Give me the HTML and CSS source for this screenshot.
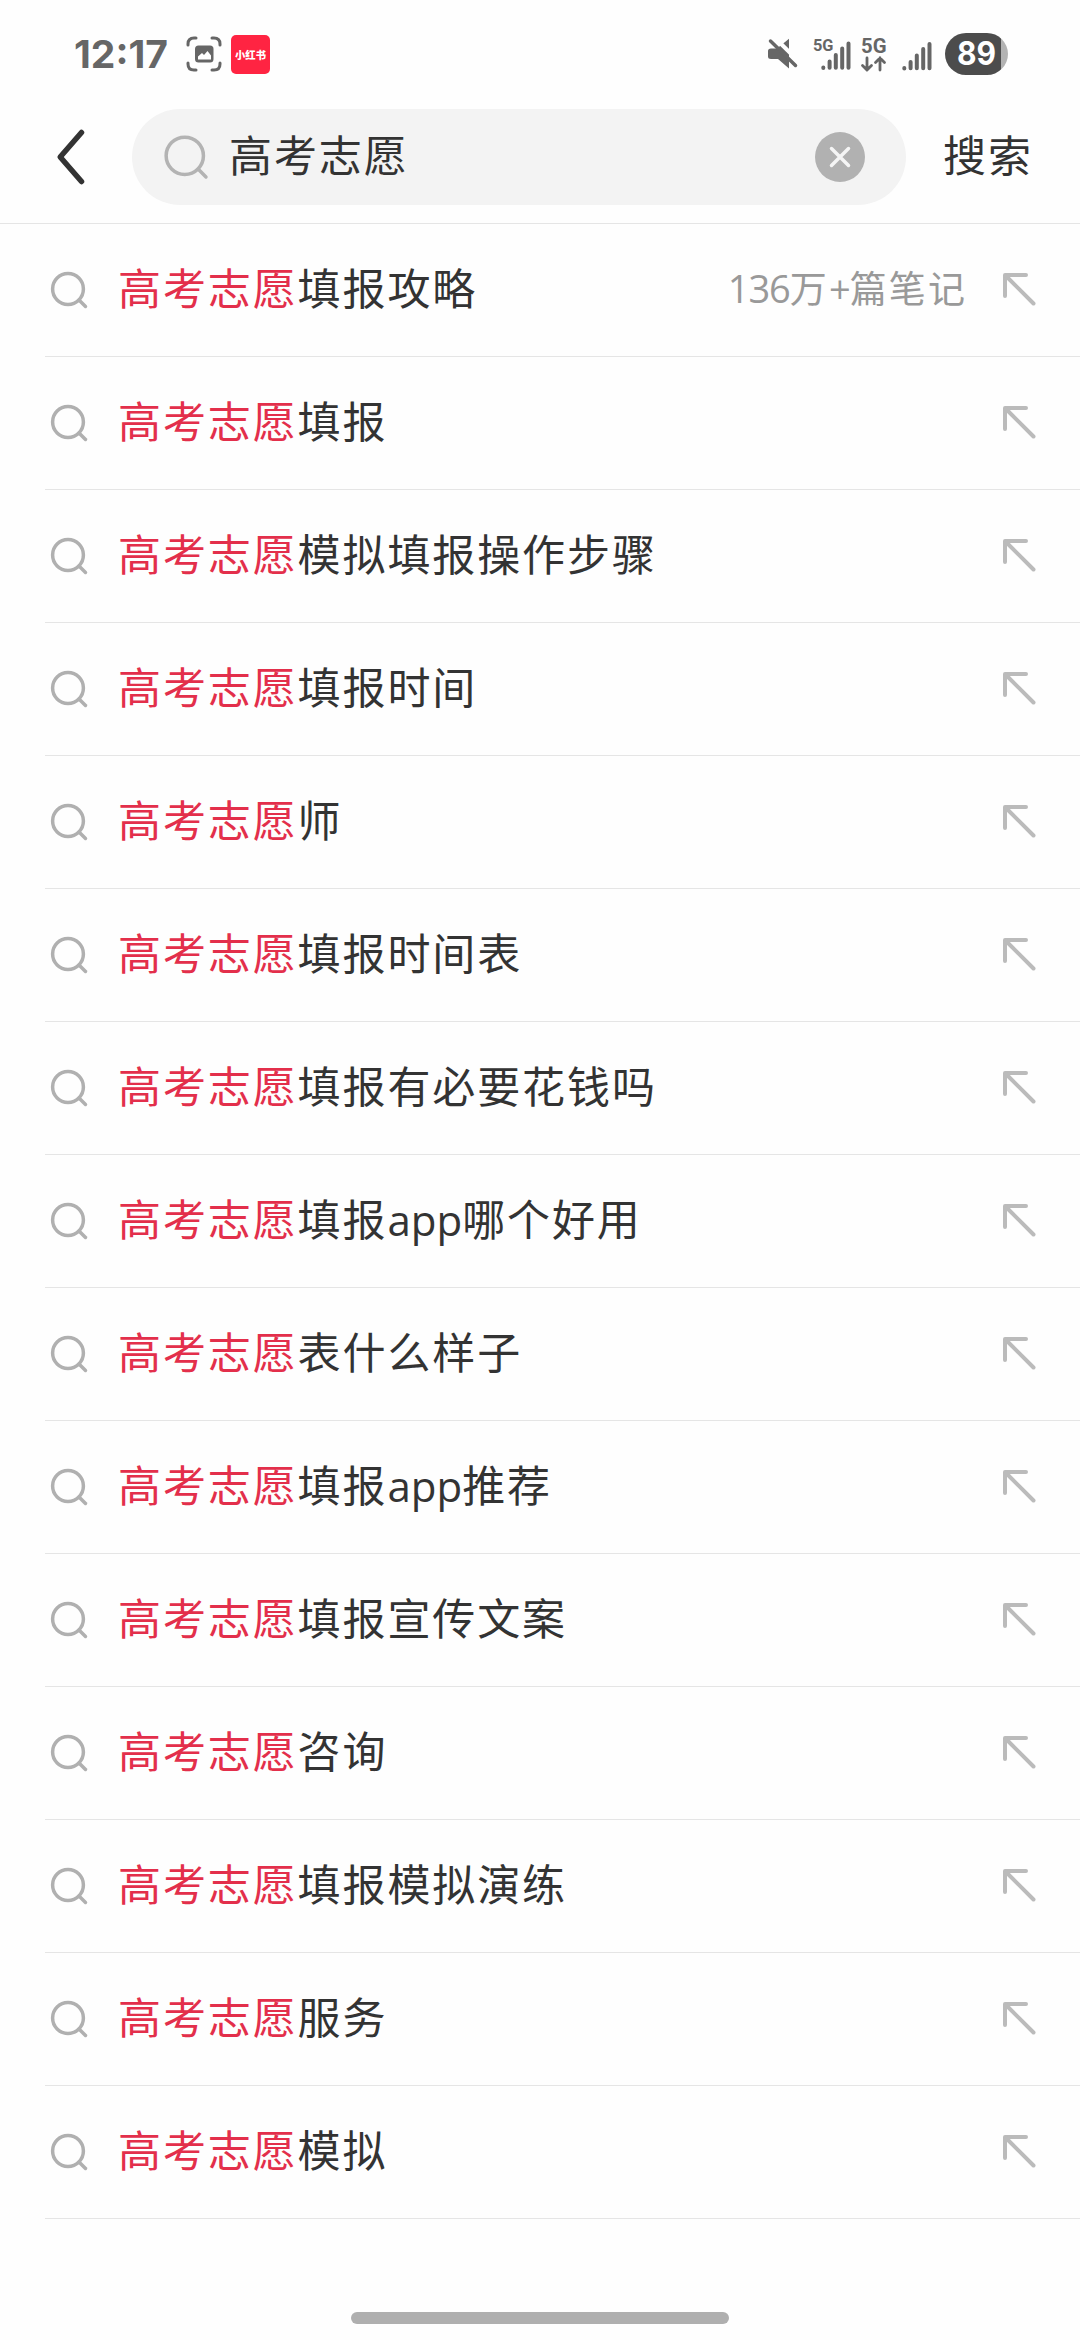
FILE: index.html
```html
<!DOCTYPE html>
<html lang="zh-CN">
    <head>
        <meta charset="utf-8">
        <title>高考志愿</title>
        <link rel="stylesheet" href="styles.css">
    </head>
    <body>

        <!-- shared icons -->
        <svg class="icon-defs">
            <symbol id="icon-search" viewBox="0 0 38 38">
                <circle cx="18" cy="18" r="15.4" />
                <path d="M29 29 L35.5 35.5" />
            </symbol>
            <symbol id="icon-fill" viewBox="0 0 34 34">
                <path d="M24 3 H3 V24" />
                <path d="M4 4 L31.5 31.5" />
            </symbol>
            <symbol id="icon-signal" viewBox="0 0 30 30">
                <path d="M2.3 27 V27.4 M8.6 21 V27.3 M14.8 14.5 V27.3 M21.2 8 V27.3 M27.5 3 V27.3" />
            </symbol>
        </svg>

        <div class="status-bar">
            <div class="status-left">
                <svg class="time" width="94" height="56"><text x="-1" y="42" textLength="94" lengthAdjust="spacingAndGlyphs">12:17</text></svg>
                <svg class="capture-icon" width="36" height="36" viewBox="0 0 36 36">
                    <path class="line" d="M2 9 V8 Q2 2 8 2 H10 M26 2 H28 Q34 2 34 8 V9 M34 27 V28 Q34 34 28 34 H26 M10 34 H8 Q2 34 2 28 V27" />
                    <rect x="9" y="9.5" width="18.5" height="17" rx="3.5" />
                    <path class="hill" d="M12 23.5 V20.5 L16 17 L18 19 L21.5 15 L25 19.5 V23.5 Z" />
                </svg>
                <div class="app-badge">小红书</div>
            </div>

            <div class="status-right">
                <svg class="mute-icon" width="30" height="32" viewBox="0 0 30 32">
                    <path d="M0 13 Q0 10.5 3 10.5 H9 L21 0.8 V30.5 L10 21 H3 Q0 21 0 18.5 Z" />
                    <path class="gap" d="M6 -1 L32 24.5" />
                    <path class="slash" d="M2.5 3 L27.5 27.5" />
                </svg>
                <svg class="network" width="38" height="36" viewBox="0 0 38 36">
                    <text x="0" y="14.5" font-size="17" textLength="20.5" lengthAdjust="spacingAndGlyphs">5G</text>
                    <use href="#icon-signal" x="8" y="4.5" width="30" height="30" />
                </svg>
                <svg class="data" width="26" height="36" viewBox="0 0 26 36">
                    <text x="0" y="17" font-size="20.5" textLength="25.5" lengthAdjust="spacingAndGlyphs">5G</text>
                    <path d="M6 22 V34 M1.5 29.5 L6 34 L10.5 29.5 M19 34 V22 M14.5 26.5 L19 22 L23.5 26.5" />
                </svg>
                <svg class="signal" width="30" height="30"><use href="#icon-signal" /></svg>
                <div class="battery"><svg width="39" height="42"><text x="-1" y="32" textLength="39" lengthAdjust="spacingAndGlyphs">89</text></svg></div>
            </div>
        </div>

        <div class="header">
            <svg class="back-icon" width="28" height="58" viewBox="0 0 28 58">
                <path d="M24.5 4.5 L3.2 29 L24.5 53.5" />
            </svg>
            <div class="search-box">
                <svg class="search-icon"><use href="#icon-search" /></svg>
                <span class="keyword">高考志愿</span>
                <svg class="clear-icon" width="50" height="50" viewBox="0 0 50 50">
                    <circle cx="25" cy="25" r="25" />
                    <path d="M16.5 16.5 L33.5 33.5 M33.5 16.5 L16.5 33.5" />
                </svg>
            </div>
            <span class="search-button">搜索</span>
        </div>

        <div class="list">
            <div class="item">
                <svg class="item-icon"><use href="#icon-search" /></svg>
                <p class="text"><span class="match">高考志愿</span>填报攻略</p>
                <span class="count"><span class="number">136</span>万<span class="number">+</span>篇笔记</span>
                <svg class="fill-icon"><use href="#icon-fill" /></svg>
            </div>
            <div class="item">
                <svg class="item-icon"><use href="#icon-search" /></svg>
                <p class="text"><span class="match">高考志愿</span>填报</p>
                <svg class="fill-icon"><use href="#icon-fill" /></svg>
            </div>
            <div class="item">
                <svg class="item-icon"><use href="#icon-search" /></svg>
                <p class="text"><span class="match">高考志愿</span>模拟填报操作步骤</p>
                <svg class="fill-icon"><use href="#icon-fill" /></svg>
            </div>
            <div class="item">
                <svg class="item-icon"><use href="#icon-search" /></svg>
                <p class="text"><span class="match">高考志愿</span>填报时间</p>
                <svg class="fill-icon"><use href="#icon-fill" /></svg>
            </div>
            <div class="item">
                <svg class="item-icon"><use href="#icon-search" /></svg>
                <p class="text"><span class="match">高考志愿</span>师</p>
                <svg class="fill-icon"><use href="#icon-fill" /></svg>
            </div>
            <div class="item">
                <svg class="item-icon"><use href="#icon-search" /></svg>
                <p class="text"><span class="match">高考志愿</span>填报时间表</p>
                <svg class="fill-icon"><use href="#icon-fill" /></svg>
            </div>
            <div class="item">
                <svg class="item-icon"><use href="#icon-search" /></svg>
                <p class="text"><span class="match">高考志愿</span>填报有必要花钱吗</p>
                <svg class="fill-icon"><use href="#icon-fill" /></svg>
            </div>
            <div class="item">
                <svg class="item-icon"><use href="#icon-search" /></svg>
                <p class="text"><span class="match">高考志愿</span>填报<span class="latin">app</span>哪个好用</p>
                <svg class="fill-icon"><use href="#icon-fill" /></svg>
            </div>
            <div class="item">
                <svg class="item-icon"><use href="#icon-search" /></svg>
                <p class="text"><span class="match">高考志愿</span>表什么样子</p>
                <svg class="fill-icon"><use href="#icon-fill" /></svg>
            </div>
            <div class="item">
                <svg class="item-icon"><use href="#icon-search" /></svg>
                <p class="text"><span class="match">高考志愿</span>填报<span class="latin">app</span>推荐</p>
                <svg class="fill-icon"><use href="#icon-fill" /></svg>
            </div>
            <div class="item">
                <svg class="item-icon"><use href="#icon-search" /></svg>
                <p class="text"><span class="match">高考志愿</span>填报宣传文案</p>
                <svg class="fill-icon"><use href="#icon-fill" /></svg>
            </div>
            <div class="item">
                <svg class="item-icon"><use href="#icon-search" /></svg>
                <p class="text"><span class="match">高考志愿</span>咨询</p>
                <svg class="fill-icon"><use href="#icon-fill" /></svg>
            </div>
            <div class="item">
                <svg class="item-icon"><use href="#icon-search" /></svg>
                <p class="text"><span class="match">高考志愿</span>填报模拟演练</p>
                <svg class="fill-icon"><use href="#icon-fill" /></svg>
            </div>
            <div class="item">
                <svg class="item-icon"><use href="#icon-search" /></svg>
                <p class="text"><span class="match">高考志愿</span>服务</p>
                <svg class="fill-icon"><use href="#icon-fill" /></svg>
            </div>
            <div class="item">
                <svg class="item-icon"><use href="#icon-search" /></svg>
                <p class="text"><span class="match">高考志愿</span>模拟</p>
                <svg class="fill-icon"><use href="#icon-fill" /></svg>
            </div>
        </div>

        <div class="home-bar"></div>

    </body>
</html>
```
FILE: styles.css
```css
* {
    box-sizing: border-box;
}

body {
    margin: 0;
    width: 1080px;
    height: 2340px;
    display: flex;
    flex-direction: column;
    background-color: #fefefe;
    color: #333333;
    font-family: "Noto Sans CJK SC", sans-serif;
    overflow: hidden;
}

svg {
    display: block;
    flex-shrink: 0;
    overflow: visible;
}

.icon-defs {
    width: 0;
    height: 0;
    position: absolute;
}

/* status bar */

.status-bar {
    height: 108px;
    padding: 0 72px 0 75px;
    display: flex;
    align-items: center;
    justify-content: space-between;
}

.status-left,
.status-right {
    display: flex;
    align-items: center;
}

.time {
    fill: #666666;
    font-family: Inter, sans-serif;
    font-size: 38.5px;
    font-weight: 700;
}

.capture-icon {
    margin-left: 17px;
    fill: #666666;
}

.capture-icon .line {
    fill: none;
    stroke: #666666;
    stroke-width: 3;
    stroke-linecap: round;
}

.capture-icon .hill {
    fill: white;
}

.app-badge {
    width: 39px;
    height: 39px;
    margin-left: 9px;
    border-radius: 5px;
    background-color: #ff2442;
    color: white;
    font-size: 10.3px;
    font-weight: 900;
    line-height: 39px;
    text-align: center;
}

.mute-icon {
    fill: #666666;
}

.mute-icon .gap {
    stroke: #fefefe;
    stroke-width: 4;
}

.mute-icon .slash {
    stroke: #666666;
    stroke-width: 3.5;
    stroke-linecap: round;
}

.network,
.data,
.signal {
    fill: #666666;
    stroke-width: 4;
    stroke-linecap: round;
    font-family: Roboto, sans-serif;
    font-weight: 700;
}

#icon-signal path {
    stroke: #666666;
}

.network {
    margin-left: 15px;
}

.data {
    margin-left: 10px;
}

.data path {
    fill: none;
    stroke: #666666;
    stroke-width: 2.8;
}

.signal {
    margin: 4px 0 0 15px;
}

.battery {
    width: 63px;
    height: 42px;
    margin-left: 13px;
    padding-left: 13px;
    border-radius: 21px;
    background: linear-gradient(to right, #4c4c4c 56px, #b3b3b3 56px);
    fill: white;
    font-family: Inter, sans-serif;
    font-size: 32px;
    font-weight: 700;
}

/* search header */

.header {
    height: 116px;
    padding-left: 57px;
    display: flex;
    align-items: flex-start;
    border-bottom: 1px solid #e5e5e5;
}

.back-icon {
    margin-top: 20px;
    fill: none;
    stroke: #333333;
    stroke-width: 5.5;
    stroke-linecap: round;
    stroke-linejoin: round;
}

.search-box {
    width: 774px;
    height: 96px;
    margin: 1px 0 0 47px;
    padding: 0 41px 0 31px;
    display: flex;
    align-items: center;
    border-radius: 48px;
    background-color: #f3f3f3;
}

.search-icon {
    width: 46px;
    height: 46px;
    fill: none;
    stroke: #b3b3b3;
    stroke-width: 2.9;
    stroke-linecap: round;
}

.keyword,
.search-button,
.text {
    font-size: 43px;
    letter-spacing: 1.9px;
    line-height: 88px;
}

.keyword {
    height: 96px;
    margin-left: 20px;
    flex: 1;
}

.clear-icon {
    fill: #b1b1b1;
    stroke: none;
}

.clear-icon path {
    stroke: #f5f5f5;
    stroke-width: 3.5;
    stroke-linecap: round;
}

.search-button {
    margin: 1px 0 0 37px;
}

/* suggestions */

.item {
    height: 133px;
    margin-left: 45px;
    padding: 0 44px 0 5px;
    display: flex;
    align-items: center;
    border-bottom: 1px solid #e5e5e5;
}

.item-icon {
    width: 38px;
    height: 38px;
    fill: none;
    stroke: #b0b0b0;
    stroke-width: 3.5;
    stroke-linecap: round;
}

.text {
    height: 97px;
    margin: 0 auto 0 30px;
}

.match {
    color: #e32f4b;
}

.latin {
    font-family: "Open Sans", sans-serif;
    font-size: 42px;
    letter-spacing: 0;
}

.count {
    height: 60px;
    margin-right: 35px;
    color: #999999;
    font-size: 37px;
    letter-spacing: 2.1px;
    line-height: 55px;
}

.number {
    font-family: "Open Sans", sans-serif;
    font-size: 38px;
    letter-spacing: -1px;
}

.fill-icon {
    width: 34px;
    height: 34px;
    margin-bottom: 2px;
    fill: none;
    stroke: #bbbbbb;
    stroke-width: 4;
    stroke-linecap: round;
    stroke-linejoin: round;
}

.home-bar {
    width: 378px;
    height: 12px;
    margin: 93px auto 0;
    border-radius: 6px;
    background-color: #afafaf;
}
```
